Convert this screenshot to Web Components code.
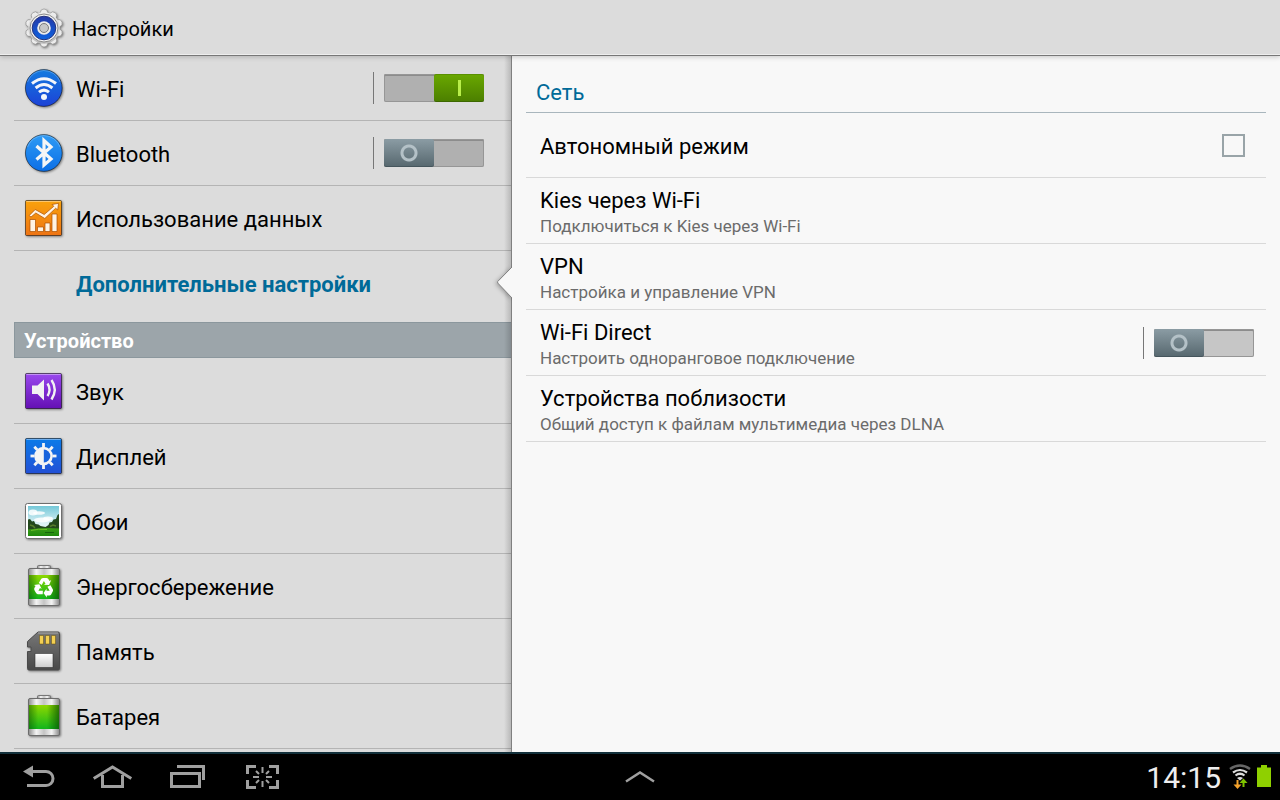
<!DOCTYPE html>
<html lang="ru">
<head>
<meta charset="utf-8">
<meta name="viewport" content="width=device-width, initial-scale=1">
<title>Настройки</title>
<style>
    html, body { height: 100%; margin: 0; }
    body {
        font-family: Roboto, "Noto Sans", sans-serif;
        font-size: 22px;
        color: #000;
        background: #f8f8f8;
    }
</style>
</head>
<body>
<settings-app>
    <app-header slot="header">Настройки</app-header>

    <settings-sidebar slot="sidebar">
        <menu-item icon="wifi" toggle="on">Wi-Fi</menu-item>
        <menu-item icon="bluetooth" toggle="off">Bluetooth</menu-item>
        <menu-item icon="data">Использование данных</menu-item>
        <menu-item selected>Дополнительные настройки</menu-item>
        <menu-section>Устройство</menu-section>
        <menu-item icon="sound">Звук</menu-item>
        <menu-item icon="display">Дисплей</menu-item>
        <menu-item icon="wallpaper">Обои</menu-item>
        <menu-item icon="powersave">Энергосбережение</menu-item>
        <menu-item icon="memory">Память</menu-item>
        <menu-item icon="battery">Батарея</menu-item>
    </settings-sidebar>

    <pref-panel slot="content" heading="Сеть">
        <pref-row control="checkbox">Автономный режим</pref-row>
        <pref-row summary="Подключиться к Kies через Wi-Fi">Kies через Wi-Fi</pref-row>
        <pref-row summary="Настройка и управление VPN">VPN</pref-row>
        <pref-row control="switch" summary="Настроить одноранговое подключение">Wi-Fi Direct</pref-row>
        <pref-row summary="Общий доступ к файлам мультимедиа через DLNA">Устройства поблизости</pref-row>
    </pref-panel>

    <system-bar slot="footer" time="14:15"></system-bar>
</settings-app>

<script>
    // battery body is shared by "battery" and "powersave"
    const batteryShape = `
        <defs>
            <linearGradient id="metal">
                <stop offset="0" stop-color="#8b8b8b"/><stop offset=".25" stop-color="#f4f4f4"/>
                <stop offset=".5" stop-color="#c4c4c4"/><stop offset=".75" stop-color="#f4f4f4"/><stop offset="1" stop-color="#888"/>
            </linearGradient>
            <linearGradient id="charge" x2="0" y2="1">
                <stop offset="0" stop-color="#8ed800"/><stop offset="1" stop-color="#12b51c"/>
            </linearGradient>
            <linearGradient id="edge">
                <stop offset="0" stop-color="#064d00" stop-opacity=".5"/><stop offset=".3" stop-color="#064d00" stop-opacity="0"/>
                <stop offset=".6" stop-color="#064d00" stop-opacity="0"/><stop offset="1" stop-color="#064d00" stop-opacity=".7"/>
            </linearGradient>
        </defs>
        <rect x="13.5" y="-.5" width="13" height="5" rx="1" fill="url(#metal)" stroke="#777"/>
        <rect x="4.500" y="2.500" width="31" height="37" rx="1.500" fill="url(#metal)" stroke="#6c6c6c"/>
        <rect x="5" y="9" width="30" height="24" fill="url(#charge)"/>
        <rect x="5" y="9" width="30" height="24" fill="url(#edge)"/>`;

    const tile = (top, bottom, glyph) => `
        <defs><linearGradient id="bg" x2="0" y2="1"><stop offset="0" stop-color="${top}"/><stop offset="1" stop-color="${bottom}"/></linearGradient></defs>
        <g transform="translate(0 1)">
            <rect x="1.500" y="1.500" width="36" height="35" rx="1" fill="url(#bg)" stroke="#000" stroke-opacity=".5"/>
            <path d="M2.500 2.500h34" stroke="#fff" stroke-opacity=".4"/>
            ${glyph}
        </g>`;

    const disc = (top, bottom) => `
        <defs><linearGradient id="bg" x2="0" y2="1"><stop offset="0" stop-color="${top}"/><stop offset="1" stop-color="${bottom}"/></linearGradient></defs>
        <circle cx="19.800" cy="20" r="18.400" fill="url(#bg)" stroke="#000" stroke-opacity=".5"/>
        <path d="M3.500 14a17.300 17.300 0 0 1 32.600 0" fill="none" stroke="#fff" stroke-opacity=".25"/>`;

    const gearTeeth = Array.from({ length: 10 }, (_, i) =>
        `<path d="M16 5.500l1.200-3.500q2.800-2 5.600 0l1.200 3.500z" transform="rotate(${i * 36} 20 20)"/>`).join('');

    const sunRays = Array.from({ length: 8 }, (_, i) =>
        `<path d="M19.500 10V6" transform="rotate(${i * 45} 19.500 19)"/>`).join('');

    const ICONS = {
        settings: `
            <defs>
                <linearGradient id="silver" x2="0" y2="1"><stop offset="0" stop-color="#eee"/><stop offset="1" stop-color="#bbb"/></linearGradient>
                <linearGradient id="blue" x2="0" y2="1"><stop offset="0" stop-color="#2439a8"/><stop offset="1" stop-color="#0d62e0"/></linearGradient>
            </defs>
            <g fill="#ececec" stroke="#8a8a8a" stroke-width=".6">${gearTeeth}</g>
            <circle cx="20" cy="20" r="15.800" fill="url(#silver)"/>
            <circle cx="20" cy="20" r="14" fill="#f2f2f2" stroke="#8a8a8a"/>
            <circle cx="20" cy="20" r="11.800" fill="url(#blue)" stroke="#26347c"/>
            <circle cx="20" cy="20" r="6.800" fill="#ececec"/>
            <circle cx="20" cy="20" r="4.500" fill="#c8c8c8" stroke="#7c7c7c"/>`,
        wifi: disc('#127be0', '#1d42d6') + `
            <g fill="none" stroke="#f4f6fa" stroke-width="3">
                <path d="M8 15.500q12-9.500 24 0"/><path d="M11.600 20q8.400-7 16.800 0"/><path d="M15 24.200q5-4.200 10 0"/>
            </g>
            <circle cx="20" cy="29" r="3" fill="#f4f6fa"/>`,
        bluetooth: disc('#2f9bf5', '#0c6fe6') + `
            <path d="M12.500 13L27 26l-7 6V7.500L27 14 12.500 26.500" fill="none" stroke="#f6f6f6" stroke-width="3.200"/>`,
        data: tile('#f9a20c', '#ee7414', `
            <g fill="#fff3e3" stroke="#a94f00" stroke-width=".7">
                <path d="M6 20.500h5.500V32.500H6zM13.500 28h6v4.500h-6zM21 24h5v8.500h-5zM28 15h5v17.500h-5z"/>
                <path d="M5.200 16.500l6-6 9 5L29.800 7.300 28 5.500l6.500-1.200-.8 6.700-2-1.800L20.800 19.500l-9-5.500L7 18z"/>
            </g>`),
        sound: tile('#9a49ee', '#6410b4', `
            <path d="M8 13.500h5.500l6.500-6v21l-6.500-6.500H8z" fill="#f2f2f2"/>
            <g fill="none" stroke="#f2f2f2" stroke-width="2.400"><path d="M23.500 11.500q4 6 0 12.500M27.500 8q6.500 9.500 0 19.500"/></g>`),
        display: tile('#0b7be8', '#2250d6', `
            <g stroke="#f4f4f4" stroke-width="2.800">${sunRays}</g>
            <circle cx="19.500" cy="19" r="9.300" fill="#f4f4f4"/>
            <path d="M19.800 12.500a6.500 6.500 0 0 1 0 13z" fill="#1964dc"/>`),
        wallpaper: `
            <defs>
                <linearGradient id="sky" x2="0" y2="1"><stop offset="0" stop-color="#74c8d8"/><stop offset=".6" stop-color="#dff3f7"/></linearGradient>
                <linearGradient id="grass" x2="0" y2="1"><stop offset="0" stop-color="#3c9c18"/><stop offset="1" stop-color="#1f8a0d"/></linearGradient>
            </defs>
            <g transform="translate(0 1)">
                <rect x="1.500" y="1.500" width="36" height="35" rx="2" fill="#fff" stroke="#6e6e6e"/>
                <rect x="4" y="4" width="31" height="30" fill="url(#sky)"/>
                <g fill="#fff" fill-opacity=".85">
                    <ellipse cx="9" cy="10.500" rx="4.500" ry="3"/><ellipse cx="15" cy="11" rx="6" ry="1.800"/>
                    <ellipse cx="18" cy="18" rx="8" ry="2.500"/><ellipse cx="24" cy="16.500" rx="5" ry="2"/>
                </g>
                <path d="M4 17.500l2-.5 2 2.500 2-.5 1.500 3 3 .5 2 1.500 5 1 3-2 1-2.500 2.500-.5 1.500-2.500 2.500-.5L33.500 13l1.500-1v17H4z" fill="#23481d"/>
                <path d="M6 23l3 1 2 2M26 24.500l3-1.500 3 1" fill="none" stroke="#567c2c" stroke-width="1.500"/>
                <path d="M4 27.500q15-2.500 31-1V34H4z" fill="url(#grass)"/>
                <path d="M7 28.500q7-2 16-1" stroke="#6dbb2a" fill="none"/><path d="M21 30.500h9" stroke="#17650c"/>
            </g>`,
        powersave: batteryShape + `
            <defs>
                <g id="arrow">
                    <path d="M14.800 17l2.500-4.200q.7-.9 1.900-.9h3.200q1.200 0 1.900 1l1.300 2.100 1.600-.9-2.100 5-5.300-.4 1.700-1-1.600-2.700-2.200 3.900z"/>
                </g>
            </defs>
            <g fill="#fff"><use href="#arrow"/><use href="#arrow" transform="rotate(120 20 21.500)"/><use href="#arrow" transform="rotate(240 20 21.500)"/></g>`,
        memory: `
            <defs>
                <linearGradient id="card" x2="0" y2="1"><stop offset="0" stop-color="#777"/><stop offset="1" stop-color="#484848"/></linearGradient>
                <linearGradient id="label" x2="0" y2="1"><stop offset="0" stop-color="#fff"/><stop offset="1" stop-color="#ccc"/></linearGradient>
            </defs>
            <path d="M14 1h20q1.500 0 1.500 1.500v35q0 1.500-1.500 1.500H5q-1.500 0-1.500-1.500V20.500H7V16H3.500v-5.500z" fill="url(#card)" stroke="#4a4a4a"/>
            <path d="M14 2h20" stroke="#aaa"/>
            <path d="M15.500 4.500h4V13h-4zM21.500 4.500h4V13h-4zM27.500 4.500h4V13h-4z" fill="#f3cf52" stroke="#5c4b12" stroke-width=".5"/>
            <path d="M11 22.500h18v14H11z" fill="url(#label)" stroke="#333" stroke-width=".6"/>`,
        battery: batteryShape
    };

    class SettingsIcon extends HTMLElement {
        connectedCallback() {
            this.attachShadow({ mode: 'open' });
            this.shadowRoot.innerHTML = `
                <style>
                    :host { display: block; width: 40px; height: 40px; flex: none; }
                    svg {
                        display: block;
                        overflow: visible;
                        filter: drop-shadow(1px 1px 1px rgba(0, 0, 0, 0.45));
                    }
                </style>
                <svg width="40" height="40" viewBox="0 0 40 40" aria-hidden="true">${ICONS[this.getAttribute('name')] || ''}</svg>
            `;
        }
    }

    // Rules for the switch, used by every element that holds one
    const switchStyles = `
        .switch-box {
            display: flex;
            align-items: center;
            height: 32px;
            padding-left: 10px;
            border-left: 1px solid #777;
        }
        .switch {
            appearance: none;
            display: flex;
            box-sizing: border-box;
            width: 100px;
            height: 28px;
            margin: 0;
            border-radius: 2px;
            background: var(--track, #b0b0b0);
            box-shadow: inset 0 0 0 1px #969696, inset 0 2px 0 #8c8c8c;
        }
        .switch::before {
            content: "";
            width: 50px;
            height: 28px;
            border-radius: 2px;
            background:
                radial-gradient(circle at 25px 14px, transparent 5px, #b4c1c7 6px, #b4c1c7 8px, transparent 9px),
                linear-gradient(#8b9ca4, #56676e);
            box-shadow: inset 0 -1px 0 #45555c;
        }
        .switch:checked::before {
            margin-left: 50px;
            background:
                linear-gradient(#b9ee4a, #b9ee4a) 24px 6px / 3px 16px no-repeat,
                linear-gradient(#6aa800, #4b7e00);
            box-shadow: inset 0 1px 0 #5a9000, inset 0 -1px 0 #3d6800;
        }
    `;

    class SettingsApp extends HTMLElement {
        connectedCallback() {
            this.attachShadow({ mode: 'open' });
            this.shadowRoot.innerHTML = `
                <style>
                    :host {
                        display: grid;
                        grid-template-rows: auto minmax(0, 1fr) auto;
                        height: 100vh;
                    }
                    main {
                        display: grid;
                        grid-template-columns: 2fr 3fr;
                        min-height: 0;
                        overflow: hidden;
                    }
                </style>
                <slot name="header"></slot>
                <main>
                    <slot name="sidebar"></slot>
                    <slot name="content"></slot>
                </main>
                <slot name="footer"></slot>
            `;
        }
    }

    class AppHeader extends HTMLElement {
        connectedCallback() {
            this.attachShadow({ mode: 'open' });
            this.shadowRoot.innerHTML = `
                <style>
                    :host { display: block; position: relative; z-index: 3; }
                    header {
                        display: flex;
                        align-items: center;
                        gap: 8px;
                        box-sizing: border-box;
                        height: 56px;
                        padding: 0 24px;
                        background: #dcdcdc;
                        border-bottom: 1px solid #777;
                        box-shadow: inset 0 -1px 0 #eee, 0 1px 5px rgba(0, 0, 0, 0.2);
                    }
                    h1 { margin: 0; padding-top: 2px; font-size: 20px; font-weight: 400; line-height: 28px; }
                </style>
                <header>
                    <settings-icon name="settings"></settings-icon>
                    <h1><slot></slot></h1>
                </header>
            `;
        }
    }

    class SettingsSidebar extends HTMLElement {
        connectedCallback() {
            this.attachShadow({ mode: 'open' });
            this.shadowRoot.innerHTML = `
                <style>
                    :host {
                        display: block;
                        position: relative;
                        min-height: 0;
                        overflow: hidden;
                        background: #dcdcdc;
                    }
                    nav { padding-left: 14px; }
                    /* shade along the edge of the right panel */
                    :host::after {
                        content: "";
                        position: absolute;
                        inset: 0 0 0 auto;
                        width: 8px;
                        box-sizing: border-box;
                        border-right: 1px solid #808080;
                        background: linear-gradient(90deg, transparent, rgba(0, 0, 0, 0.16));
                        pointer-events: none;
                    }
                </style>
                <nav><slot></slot></nav>
            `;
        }
    }

    class MenuSection extends HTMLElement {
        connectedCallback() {
            this.attachShadow({ mode: 'open' });
            this.shadowRoot.innerHTML = `
                <style>
                    :host { display: block; padding: 6px 0 1px; }
                    h2 {
                        box-sizing: border-box;
                        height: 36px;
                        margin: 0;
                        padding: 0 9px;
                        border: 1px solid #8b979d;
                        background: #9ca5aa;
                        color: #fff;
                        font-size: 20px;
                        font-weight: 700;
                        line-height: 36px;
                    }
                </style>
                <h2><slot></slot></h2>
            `;
        }
    }

    class MenuItem extends HTMLElement {
        connectedCallback() {
            const icon = this.getAttribute('icon');
            const toggle = this.getAttribute('toggle');
            const selected = this.hasAttribute('selected');

            this.attachShadow({ mode: 'open' });
            this.shadowRoot.innerHTML = `
                <style>
                    ${switchStyles}
                    :host { display: block; position: relative; }
                    .row {
                        display: flex;
                        align-items: center;
                        gap: 12px;
                        height: 64px;
                        padding: 0 28px 0 10px;
                        border-bottom: 1px solid #b4b4b4;
                        color: inherit;
                        text-decoration: none;
                    }
                    .title { flex: 1; line-height: 28px; padding-top: 4px; }
                    :host([selected]) .row { border-color: transparent; }
                    :host([selected]) { color: #006a98; font-weight: 700; z-index: 1; }
                    .notch {
                        position: absolute;
                        top: 16px;
                        right: 0;
                        filter: drop-shadow(-1px 1px 2px rgba(0, 0, 0, 0.3));
                    }
                </style>
                ${toggle ? `
                    <div class="row">
                        <settings-icon name="${icon}"></settings-icon>
                        <label class="title" for="toggle"><slot></slot></label>
                        <span class="switch-box"><input class="switch" id="toggle" type="checkbox" role="switch" ${toggle === 'on' ? 'checked' : ''}></span>
                    </div>` : `
                    <a class="row" href="#" ${selected ? 'aria-current="page"' : ''}>
                        <settings-icon name="${icon || ''}"></settings-icon>
                        <span class="title"><slot></slot></span>
                    </a>`}
                ${selected ? `
                    <svg class="notch" width="15" height="31" viewBox="0 0 15 31" aria-hidden="true">
                        <path d="M15 0L.7 14.500v1.500L15 31z" fill="#f8f8f8"/>
                        <path d="M15 0L.7 14.500v1.500L15 31" fill="none" stroke="#808080"/>
                    </svg>` : ''}
            `;
        }
    }

    class PrefPanel extends HTMLElement {
        connectedCallback() {
            this.attachShadow({ mode: 'open' });
            this.shadowRoot.innerHTML = `
                <style>
                    :host { display: block; min-height: 0; overflow: hidden; background: #f8f8f8; }
                    section { padding: 18px 14px 0; }
                    h2 {
                        margin: 0;
                        padding: 0 10px;
                        border-bottom: 1px solid #a9b6bd;
                        color: #006a98;
                        font-size: 22px;
                        font-weight: 400;
                        line-height: 38px;
                    }
                </style>
                <section>
                    <h2>${this.getAttribute('heading')}</h2>
                    <slot></slot>
                </section>
            `;
        }
    }

    class PrefRow extends HTMLElement {
        connectedCallback() {
            const summary = this.getAttribute('summary');
            const control = this.getAttribute('control');
            const text = `
                <span class="title"><slot></slot></span>
                ${summary ? `<span class="summary">${summary}</span>` : ''}
            `;
            const box = control === 'switch'
                ? '<span class="switch-box"><input class="switch" id="control" type="checkbox" role="switch"></span>'
                : '<input class="check" id="control" type="checkbox">';

            this.attachShadow({ mode: 'open' });
            this.shadowRoot.innerHTML = `
                <style>
                    ${switchStyles}
                    :host { display: block; --track: #c6c6c6; }
                    .row {
                        display: flex;
                        align-items: center;
                        min-height: 64px;
                        padding: 0 12px 0 14px;
                        border-bottom: 1px solid #d9d9d9;
                        color: inherit;
                        text-decoration: none;
                    }
                    .text { display: flex; flex: 1; flex-direction: column; padding-top: 4px; }
                    :host([summary]) .row { min-height: 65px; }
                    .title { line-height: 26px; }
                    .summary { color: #6b6b6b; font-size: 17px; line-height: 24px; }
                    .check {
                        appearance: none;
                        box-sizing: border-box;
                        width: 23px;
                        height: 23px;
                        margin: 0 9px 0 0;
                        border: 2px solid #99a4a8;
                    }
                </style>
                ${control
                    ? `<div class="row"><label class="text" for="control">${text}</label>${box}</div>`
                    : `<a class="row" href="#"><span class="text">${text}</span></a>`}
            `;
        }
    }

    class SystemBar extends HTMLElement {
        connectedCallback() {
            this.attachShadow({ mode: 'open' });
            this.shadowRoot.innerHTML = `
                <style>
                    :host { display: block; position: relative; z-index: 3; }
                    footer {
                        display: grid;
                        grid-template-columns: 1fr auto 1fr;
                        height: 46px;
                        border-top: 2px solid #12303b;
                        background: #000;
                    }
                    .keys { display: flex; }
                    button { padding: 0; border: 0; background: none; color: #a0a0a0; }
                    svg { display: block; fill: none; stroke: currentColor; stroke-width: 3; }
                    .status {
                        display: flex;
                        align-items: center;
                        justify-content: flex-end;
                        padding-right: 8px;
                        gap: 5px;
                    }
                    time { padding: 2px 3px 0 0; color: #eee; font-size: 30px; line-height: 44px; }
                </style>
                <footer>
                    <div class="keys">
                        <button type="button" aria-label="Назад">
                            <svg width="75" height="46"><path d="M31 17.500h15a7 7 0 0 1 0 14H27"/><path d="M23 17.500l10-6v12z" fill="currentColor" stroke="none"/></svg>
                        </button>
                        <button type="button" aria-label="Домой">
                            <svg width="75" height="46"><path d="M18.700 24.500L37.500 13l18.800 11.500"/><path d="M27.500 21v11.500h20V21"/></svg>
                        </button>
                        <button type="button" aria-label="Недавние приложения">
                            <svg width="75" height="46"><path d="M21.500 19.500h28v13h-28z"/><path d="M27 12.500h26.500V26"/></svg>
                        </button>
                        <button type="button" aria-label="Снимок экрана">
                            <svg width="75" height="46">
                                <path d="M22.500 20v-7.500H31M44 12.500h8.500V20M52.500 26v7.500H44M31 33.500h-8.500V26"/>
                                <path d="M37.500 13v6M37.500 27v6M28 23h6M41 23h6M31 17l3 3M41 26l3 3M44 17l-3 3M34 26l-3 3" stroke-width="2"/>
                            </svg>
                        </button>
                    </div>
                    <button type="button" aria-label="Панель приложений">
                        <svg width="40" height="46"><path d="M6 27.500l14-9 14 9" stroke-width="2.500"/></svg>
                    </button>
                    <div class="status">
                        <time>${this.getAttribute('time')}</time>
                        <svg width="22" height="26" viewBox="0 0 22 26" role="img" aria-label="Wi-Fi">
                            <path d="M1 5q10-7 20 0" stroke="#666" stroke-width="2.500"/>
                            <path d="M4 8.500q7-5 14 0M6.500 11.500q4.500-3.500 9 0" stroke="#ddd" stroke-width="2.200"/>
                            <path d="M8 14q3-2 6 0l-3 2.500z" fill="#ddd" stroke="none"/>
                            <path d="M8.500 16v7" stroke="#f5a32c" stroke-width="2"/><path d="M4.500 20.500h8l-4 4.500z" fill="#f5a32c" stroke="none"/>
                            <path d="M14.500 23v-5" stroke="#7fc300" stroke-width="2"/><path d="M10.500 19h8l-4-4.500z" fill="#7fc300" stroke="none"/>
                        </svg>
                        <svg width="16" height="24" viewBox="0 0 16 24" role="img" aria-label="Батарея">
                            <path d="M1 2.500h4V0h6v2.500h4V22H1z" fill="#8fd000" stroke="none"/>
                        </svg>
                    </div>
                </footer>
            `;
        }
    }

    customElements.define('settings-icon', SettingsIcon);
    customElements.define('settings-app', SettingsApp);
    customElements.define('app-header', AppHeader);
    customElements.define('settings-sidebar', SettingsSidebar);
    customElements.define('menu-section', MenuSection);
    customElements.define('menu-item', MenuItem);
    customElements.define('pref-panel', PrefPanel);
    customElements.define('pref-row', PrefRow);
    customElements.define('system-bar', SystemBar);
</script>
</body>
</html>
